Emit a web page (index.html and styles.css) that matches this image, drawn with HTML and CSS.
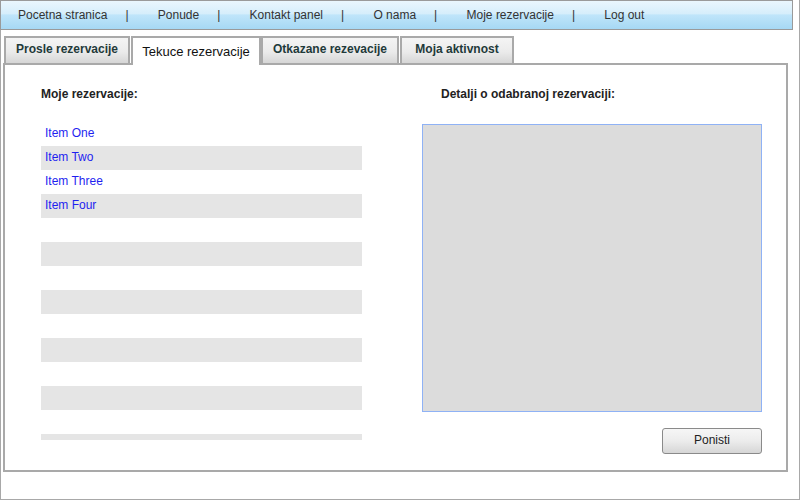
FILE: index.html
```html
<!DOCTYPE html>
<html>
<head>
<meta charset="utf-8">
<link rel="stylesheet" href="styles.css">
</head>
<body>
<div class="window">
  <div class="nav">
    <span class="nav-link">Pocetna stranica</span><span class="sep">|</span>
    <span class="nav-link">Ponude</span><span class="sep">|</span>
    <span class="nav-link">Kontakt panel</span><span class="sep">|</span>
    <span class="nav-link">O nama</span><span class="sep">|</span>
    <span class="nav-link">Moje rezervacije</span><span class="sep">|</span>
    <span class="nav-link">Log out</span>
  </div>
  <div class="tabs">
    <div class="tab t1">Prosle rezervacije</div>
    <div class="tab active t2">Tekuce rezervacije</div>
    <div class="tab t3">Otkazane rezevacije</div>
    <div class="tab t4">Moja aktivnost</div>
  </div>
  <div class="panel">
    <div class="col left">
      <div class="heading">Moje rezervacije:</div>
      <div class="list">
        <div class="row">Item One</div>
        <div class="row">Item Two</div>
        <div class="row">Item Three</div>
        <div class="row">Item Four</div>
        <div class="row"></div>
        <div class="row"></div>
        <div class="row"></div>
        <div class="row"></div>
        <div class="row"></div>
        <div class="row"></div>
        <div class="row"></div>
        <div class="row"></div>
        <div class="row"></div>
        <div class="row"></div>
      </div>
    </div>
    <div class="col right">
      <div class="heading rhead">Detalji o odabranoj rezervaciji:</div>
      <div class="details"></div>
      <div class="actions"><button class="btn">Ponisti</button></div>
    </div>
  </div>
</div>
</body>
</html>
```
FILE: styles.css
```css
html, body {
  margin: 0;
  padding: 0;
  background: #ffffff;
}
body {
  font-family: "Liberation Sans", Arial, sans-serif;
  font-size: 12px;
}
.window {
  width: 800px;
  height: 500px;
  box-sizing: border-box;
  border: 1px solid #a8a8a8;
  border-top: none;
  background: #fff;
}
.nav {
  width: 793px;
  height: 30px;
  margin-left: -1px;
  box-sizing: border-box;
  border: 1px solid #9a9a9a;
  background: linear-gradient(#eaf6fd 0%, #d6eefb 45%, #bfe5fa 50%, #a6d8f4 100%);
  display: flex;
  align-items: center;
  padding-left: 17px;
  color: #333;
  font-size: 12px;
}
.sep {
  margin: 0 29.3px 0 18px;
}
.tabs {
  display: flex;
  margin-top: 6px;
  padding-left: 3px;
  height: 27px;
  align-items: flex-end;
  position: relative;
  z-index: 1;
}
.tab {
  box-sizing: border-box;
  height: 27px;
  border: 2px solid #a9a9a9;
  border-bottom: none;
  background: linear-gradient(#f4f4f4 0%, #ebebeb 55%, #d6d6d6 100%);
  font-weight: bold;
  color: #1f3a3a;
  display: flex;
  align-items: center;
  justify-content: center;
  padding-bottom: 3px;
}
.t1 { width: 126px; }
.t2 { width: 130px; margin-left: 1px; }
.t3 { width: 138px; margin-left: 0; }
.t4 { width: 114px; margin-left: 1px; }
.tab.active {
  background: #fff;
  font-weight: normal;
  font-size: 13px;
  color: #111;
  height: 29px;
  margin-bottom: -2px;
  padding-bottom: 0;
}
.panel {
  margin-left: 2px;
  width: 785px;
  height: 409px;
  box-sizing: border-box;
  border: 2px solid #a9a9a9;
  display: flex;
  padding: 22px 0 0 36px;
}
.col {
  display: flex;
  flex-direction: column;
}
.left {
  width: 321px;
}
.right {
  width: 340px;
  margin-left: 60px;
}
.heading {
  font-weight: bold;
  color: #222;
  height: 14px;
  line-height: 14px;
}
.rhead {
  padding-left: 19px;
}
.list {
  margin-top: 21px;
  height: 318px;
  overflow: hidden;
}
.row {
  height: 24px;
  line-height: 22px;
  padding-left: 4px;
  color: #1f1ff0;
  font-size: 12px;
}
.row:nth-child(even) {
  background: #e5e5e5;
}
.details {
  margin-top: 23px;
  height: 288px;
  box-sizing: border-box;
  border: 1px solid #8fb2f5;
  background: #dcdcdc;
}
.actions {
  display: flex;
  justify-content: flex-end;
  margin-top: 16px;
}
.btn {
  width: 100px;
  height: 26px;
  box-sizing: border-box;
  border: 1px solid #8a8a8a;
  border-radius: 3px;
  background: linear-gradient(#f6f6f6 0%, #ececec 50%, #d6d6d6 100%);
  font-family: "Liberation Sans", Arial, sans-serif;
  font-size: 12px;
  color: #222;
  padding: 0 0 2px 0;
}
```
